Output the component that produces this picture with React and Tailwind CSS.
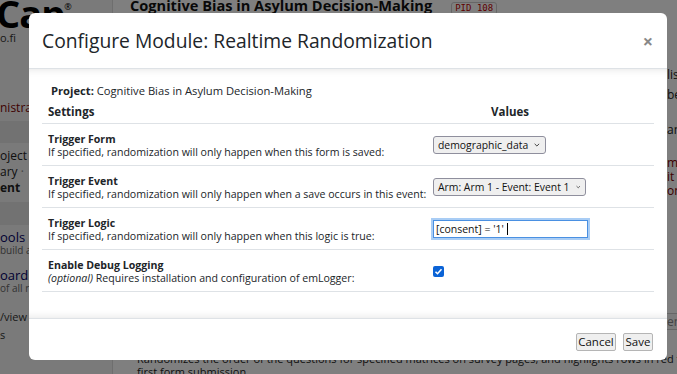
import React from "react";

function FakeSelect({ label, width }) {
  return (
    <div
      className={`flex items-center justify-between h-[18px] pl-[4px] pr-[5px] border border-[#8f8f9d] rounded-[3px] bg-[#efefef] text-[10.4px] text-[#111] ${width}`}
    >
      <span className="leading-none whitespace-nowrap">{label}</span>
      <svg width="9" height="6" viewBox="0 0 9 6" className="ml-[6px]">
        <path d="M1 1.2l3.5 3.4 3.5-3.4" fill="none" stroke="#222" strokeWidth="1.3" />
      </svg>
    </div>
  );
}

function SettingRow({ title, desc, children }) {
  return (
    <div className="grid grid-cols-[385px_1fr] items-center h-[42px] border-b border-[#dee2e6]">
      <div className="px-[6px] pt-[2px] text-[10.6px] leading-[13px] text-[#212529]">
        <div className="font-bold">{title}</div>
        <div className="whitespace-nowrap">{desc}</div>
      </div>
      <div className="pl-[6px] pt-[1px]">{children}</div>
    </div>
  );
}

export default function App() {
  return (
    <div className="relative w-[677px] h-[374px] overflow-hidden bg-white font-['Open_Sans',sans-serif] text-[#212529] flex">
      {/* page behind the modal */}
      <div className="w-[113px] shrink-0 h-full bg-[#f4f4f4] border-r border-[#dcdcdc] flex flex-col">
        <div className="h-[30px] flex items-start ml-[-4px] mt-[-6px]">
          <span className="text-[38px] font-bold leading-none tracking-[-1px] text-black">Cap</span>
          <span className="text-[9px] mt-[6px] text-black">®</span>
        </div>
        <div className="mt-[8px] text-[11px] leading-[12px] text-[#333]">o.fi</div>
        <div className="mt-[57px] text-[12px] leading-[14px] text-[#800000] whitespace-nowrap">nistrat</div>
        <div className="mt-[6px] h-[22px] bg-[#e4e4e4]" />
        <div className="mt-[6px] text-[12px] leading-[14px] text-[#222] whitespace-nowrap">oject S</div>
        <div className="mt-[2px] text-[12px] leading-[14px] text-[#222] whitespace-nowrap">
          ary <span className="text-[#888]">·</span>
        </div>
        <div className="mt-[2px] text-[12px] leading-[14px] font-bold text-[#222]">ent</div>
        <div className="mt-[7px] h-[23px] bg-[#e4e4e4]" />
        <div className="mt-[5px] text-[13px] leading-[14px] text-[#000066]">ools</div>
        <div className="text-[10px] leading-[12px] text-[#666] whitespace-nowrap">build a p</div>
        <div className="mt-[12px] text-[13px] leading-[14px] text-[#000066]">oard</div>
        <div className="text-[10px] leading-[12px] text-[#666] whitespace-nowrap">of all re</div>
        <div className="mt-[16px] text-[11px] leading-[13px] text-[#333] whitespace-nowrap">/view ex</div>
        <div className="mt-[5px] text-[11px] leading-[13px] text-[#333]">s</div>
      </div>

      <div className="flex-1 h-full flex flex-col min-w-0">
        <div className="flex items-start h-[14px] pl-[17px] gap-[19px]">
          <div className="mt-[-4px] text-[14.6px] font-bold leading-[18px] text-[#111] whitespace-nowrap">
            Cognitive Bias in Asylum Decision-Making
          </div>
          <div className="mt-[2px] h-[13px] px-[3px] border border-[#ccc] rounded-[3px] font-['DejaVu_Sans_Mono',monospace] text-[9px] leading-[11px] text-[#c00000] whitespace-nowrap">
            PID 108
          </div>
        </div>
        <div className="flex-1 flex min-h-0">
          <div className="w-[554px] shrink-0 flex flex-col justify-end">
            <p className="pl-[24px] mb-[-4px] text-[11px] leading-[13px] text-[#222] whitespace-nowrap">
              Randomizes the order of the questions for specified matrices on survey pages, and highlights rows in red that were missed on the
              <br />
              first form submission.
            </p>
          </div>
          <div className="w-[150px] shrink-0 flex flex-col text-[12px] leading-[14px] text-[#222] whitespace-nowrap">
            <div className="mt-[54px]">list</div>
            <div className="mt-[6px]">behaviour</div>
            <div className="mt-[21px]">and</div>
            <div className="mt-[19px] text-[#800000]">more</div>
            <div className="text-[#800000]">it is</div>
            <div className="text-[#800000]">only</div>
            <div className="mt-[115px] h-[17px] border-y border-[#ccc] bg-[#f7f7f7] text-[#888] leading-[15px]">en</div>
          </div>
        </div>
      </div>

      {/* overlay */}
      <div className="absolute inset-0 bg-black/50" />

      {/* modal */}
      <div className="absolute left-[29px] top-[13px] w-[638px] h-[347px] bg-white rounded-[6px] flex flex-col overflow-hidden">
        <div className="h-[56px] shrink-0 flex items-center justify-between pl-[13px] pr-[14px] border-b border-[#dee2e6]">
          <h1 className="text-[19.3px] leading-none text-[#212529]">Configure Module: Realtime Randomization</h1>
          <span className="text-[18px] font-bold leading-none text-[#888]">×</span>
        </div>

        <div className="flex-1 min-h-0 px-[13px] pt-[14px] shadow-[inset_0_8px_8px_-8px_rgba(0,0,0,0.12),inset_0_-10px_10px_-10px_rgba(0,0,0,0.12)]">
          <div className="pl-[9px] text-[11.2px] leading-[16px] text-[#212529]">
            <span className="font-bold">Project:</span> Cognitive Bias in Asylum Decision-Making
          </div>
          <div className="mt-[3px] grid grid-cols-[385px_1fr] h-[22px] pt-[2px] items-start border-b border-[#dee2e6] text-[11.5px] leading-[16px] font-bold">
            <div className="pl-[6px]">Settings</div>
            <div className="w-[166px] text-center">Values</div>
          </div>
          <SettingRow
            title="Trigger Form"
            desc="If specified, randomization will only happen when this form is saved:"
          >
            <FakeSelect label="demographic_data" width="w-[113px]" />
          </SettingRow>
          <SettingRow
            title="Trigger Event"
            desc="If specified, randomization will only happen when a save occurs in this event:"
          >
            <FakeSelect label="Arm: Arm 1 - Event: Event 1" width="w-[153px]" />
          </SettingRow>
          <SettingRow
            title="Trigger Logic"
            desc="If specified, randomization will only happen when this logic is true:"
          >
            <div className="w-[155px] h-[18px] border border-[#4a90e2] outline outline-2 outline-[#a9cdf5] flex items-center pl-[2px] text-[10.5px] text-[#111]">
              <span className="leading-none">[consent] = '1'</span>
              <span className="ml-[3px] w-px h-[12px] bg-black" />
            </div>
          </SettingRow>
          <SettingRow
            title="Enable Debug Logging"
            desc={
              <>
                <span className="italic">(optional)</span> Requires installation and configuration of emLogger:
              </>
            }
          >
            <div className="w-[11px] h-[11px] rounded-[2px] bg-[#0b63d6] flex items-center justify-center">
              <svg width="9" height="9" viewBox="0 0 9 9">
                <path d="M1.5 4.7l2 2 4-4.4" fill="none" stroke="white" strokeWidth="1.6" />
              </svg>
            </div>
          </SettingRow>
        </div>

        <div className="h-[42px] shrink-0 flex items-center justify-end gap-[7px] pr-[14px] pt-[4px] border-t border-[#dee2e6]">
          <button className="h-[18px] w-[40px] border border-[#b5b5b5] bg-[#efefef] rounded-[2px] text-[11.5px] leading-none text-[#111]">
            Cancel
          </button>
          <button className="h-[18px] w-[30px] border border-[#b5b5b5] bg-[#efefef] rounded-[2px] text-[11.5px] leading-none text-[#111]">
            Save
          </button>
        </div>
      </div>
    </div>
  );
}
